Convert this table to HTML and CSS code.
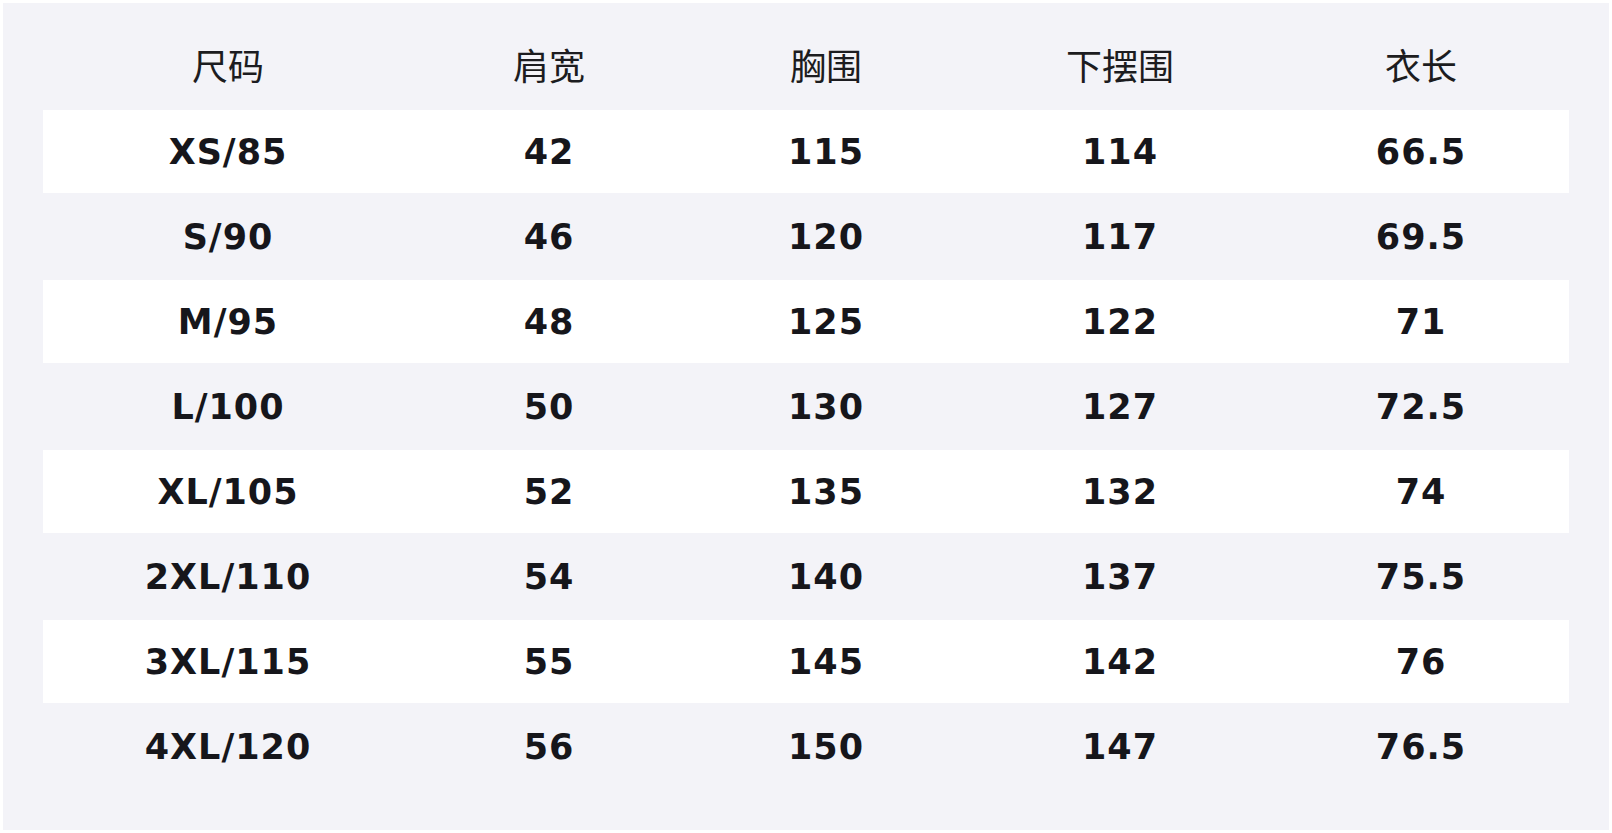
FILE: index.html
```html
<!DOCTYPE html>
<html lang="zh-CN">
<head>
<meta charset="utf-8">
<title>尺码表</title>
<link rel="stylesheet" href="styles.css">
</head>
<body>
<div class="sheet">
  <div class="row head">
    <div class="cell">尺码</div><div class="cell">肩宽</div><div class="cell">胸围</div><div class="cell">下摆围</div><div class="cell">衣长</div>
  </div>
  <div class="row odd"><div class="cell">XS/85</div><div class="cell">42</div><div class="cell">115</div><div class="cell">114</div><div class="cell">66.5</div></div>
  <div class="row even"><div class="cell">S/90</div><div class="cell">46</div><div class="cell">120</div><div class="cell">117</div><div class="cell">69.5</div></div>
  <div class="row odd"><div class="cell">M/95</div><div class="cell">48</div><div class="cell">125</div><div class="cell">122</div><div class="cell">71</div></div>
  <div class="row even"><div class="cell">L/100</div><div class="cell">50</div><div class="cell">130</div><div class="cell">127</div><div class="cell">72.5</div></div>
  <div class="row odd"><div class="cell">XL/105</div><div class="cell">52</div><div class="cell">135</div><div class="cell">132</div><div class="cell">74</div></div>
  <div class="row even"><div class="cell">2XL/110</div><div class="cell">54</div><div class="cell">140</div><div class="cell">137</div><div class="cell">75.5</div></div>
  <div class="row odd"><div class="cell">3XL/115</div><div class="cell">55</div><div class="cell">145</div><div class="cell">142</div><div class="cell">76</div></div>
  <div class="row even"><div class="cell">4XL/120</div><div class="cell">56</div><div class="cell">150</div><div class="cell">147</div><div class="cell">76.5</div></div>
</div>
</body>
</html>
```
FILE: styles.css
```css
html, body {
  margin: 0;
  padding: 0;
  background: #ffffff;
}
body {
  padding: 3px;
  width: 1606px;
}
.sheet {
  background: #f3f3f8;
  height: 827px;
  box-sizing: border-box;
  padding: 17px 40px 0 40px;
}
.row {
  display: grid;
  grid-template-columns: 370px 272px 282px 306px 1fr;
  align-items: center;
}
.cell {
  text-align: center;
  white-space: nowrap;
}
.head {
  height: 90px;
  padding-bottom: 3px;
  box-sizing: border-box;
  font-family: "Noto Sans CJK SC", "Noto Sans", sans-serif;
  font-size: 36px;
  font-weight: 400;
  color: #1c1c20;
}
.odd, .even {
  font-family: "DejaVu Sans", "Liberation Sans", sans-serif;
  font-weight: 700;
  font-size: 35px;
  letter-spacing: 1px;
  color: #16161b;
}
.odd {
  height: 83px;
  background: #ffffff;
}
.even {
  height: 87px;
}
```
